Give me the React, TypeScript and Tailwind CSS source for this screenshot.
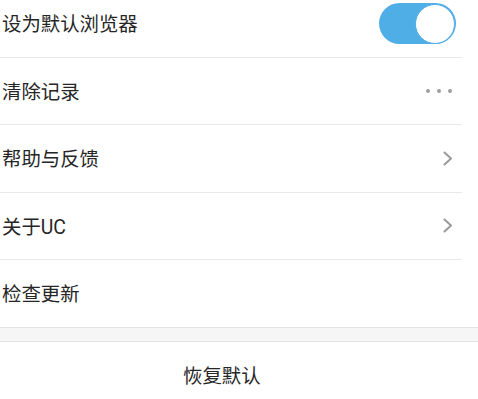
import React from "react";

const font = { fontFamily: 'Roboto, "Noto Sans CJK SC", sans-serif' };

function Chevron() {
  return (
    <svg width="12" height="15" viewBox="0 0 12 15" className="mr-[8px]">
      <path d="M2.5 1.5 L9 7.5 L2.5 13.5" fill="none" stroke="#9a9a9a" strokeWidth="2" strokeLinecap="round" strokeLinejoin="round" />
    </svg>
  );
}

function Dots() {
  return (
    <div className="flex items-center gap-[7px] mr-[10px]">
      <span className="block w-[4px] h-[4px] rounded-full bg-[#9e9e9e]" />
      <span className="block w-[4px] h-[4px] rounded-full bg-[#9e9e9e]" />
      <span className="block w-[4px] h-[4px] rounded-full bg-[#9e9e9e]" />
    </div>
  );
}

function Toggle() {
  return (
    <div className="mr-[6px] w-[77px] h-[41px] rounded-full bg-[#50aee7] flex items-center justify-end pr-[1px]">
      <div className="w-[40px] h-[40px] rounded-full bg-white border border-[#50aee7]" />
    </div>
  );
}

function Row({ label, right, first, last }: { label: string; right?: React.ReactNode; first?: boolean; last?: boolean }) {
  return (
    <div
      className={
        "flex items-center justify-between h-[67.4px] pl-[2px] " +
        (last ? "" : "border-b border-[#e8e8e8] ") +
        (first ? "mt-[-9.6px]" : "")
      }
    >
      <span className="text-[19.4px] text-[#262626] leading-none pt-[3px]">{label}</span>
      {right}
    </div>
  );
}

export default function App() {
  return (
    <div className="w-[478px] h-[399px] bg-white overflow-hidden" style={font}>
      <div className="mr-[16px]">
        <Row first label="设为默认浏览器" right={<Toggle />} />
        <Row label="清除记录" right={<Dots />} />
        <Row label="帮助与反馈" right={<Chevron />} />
        <Row label="关于UC" right={<Chevron />} />
        <Row last label="检查更新" />
      </div>
      <div className="h-[15px] bg-[#f6f6f6] border-y border-[#e4e4e4]" />
      <div className="h-[68px] flex items-center pl-[183px]">
        <span className="text-[19.4px] text-[#262626] leading-none">恢复默认</span>
      </div>
    </div>
  );
}
